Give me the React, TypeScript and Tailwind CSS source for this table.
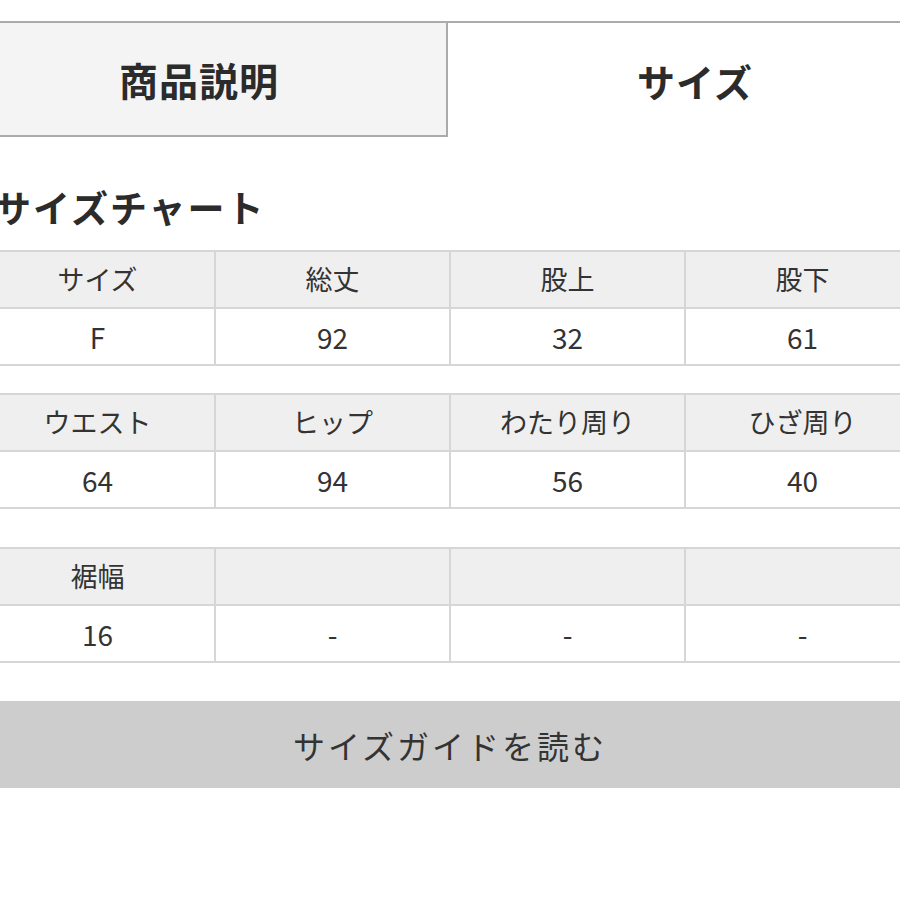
const font = { fontFamily: '"Noto Sans CJK JP", "Noto Sans", sans-serif' };

type Row = { head: string[]; vals: string[] };

const tables: Row[] = [
  { head: ['サイズ', '総丈', '股上', '股下'], vals: ['F', '92', '32', '61'] },
  { head: ['ウエスト', 'ヒップ', 'わたり周り', 'ひざ周り'], vals: ['64', '94', '56', '40'] },
  { head: ['裾幅', '', '', ''], vals: ['16', '-', '-', '-'] },
];

function SizeTable({ row, className }: { row: Row; className?: string }) {
  return (
    <div
      className={`ml-[-21px] grid w-[942px] grid-cols-4 gap-[2px] bg-[#d6d6d6] p-[2px] ${className ?? ''}`}
    >
      {row.head.map((h, i) => (
        <div
          key={'h' + i}
          className="flex h-[55px] items-center justify-center bg-[#efefef] text-[27px] text-[#333]"
        >
          {h}
        </div>
      ))}
      {row.vals.map((v, i) => (
        <div
          key={'v' + i}
          className="flex h-[55px] items-center justify-center bg-white text-[28px] text-[#333]"
        >
          {v}
        </div>
      ))}
    </div>
  );
}

export default function App() {
  return (
    <div className="h-[900px] w-[900px] overflow-hidden bg-white" style={font}>
      {/* Tabs */}
      <div className="mt-[21px] ml-[-48px] flex w-[990px] border-t-2 border-[#ababab]">
        <div className="flex h-[114px] w-[496px] items-center justify-center border-r-2 border-b-2 border-[#ababab] bg-[#f4f4f4] text-[39px] font-bold tracking-[1px] text-[#2b2b2b]">
          商品説明
        </div>
        <div className="flex h-[114px] flex-1 items-center justify-center bg-white text-[38px] font-bold tracking-[1px] text-[#2b2b2b]">
          サイズ
        </div>
      </div>

      {/* Heading */}
      <h2 className="mt-[50px] ml-[-6px] h-[40px] text-[37px] leading-[40px] font-bold tracking-[2px] text-[#2b2b2b]">
        サイズチャート
      </h2>

      <SizeTable row={tables[0]} className="mt-[23px]" />
      <SizeTable row={tables[1]} className="mt-[27px]" />
      <SizeTable row={tables[2]} className="mt-[38px]" />

      {/* Size guide button */}
      <button className="mt-[38px] flex h-[87px] w-full items-center justify-center bg-[#cdcdcd] text-[32px] tracking-[3px] text-[#333]">
        サイズガイドを読む
      </button>
    </div>
  );
}
